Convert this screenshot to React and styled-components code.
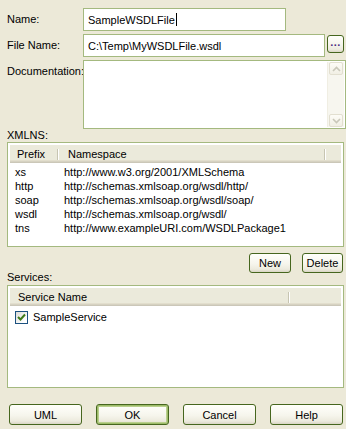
import React from "react";
import styled, { createGlobalStyle, css } from "styled-components";

const Global = createGlobalStyle`
  html, body { margin: 0; padding: 0; background: #ECE9D8; }
  body { font-family: "Liberation Sans", Arial, sans-serif; font-size: 11px; color: #000; }
  * { box-sizing: border-box; }
`;

const Dialog = styled.div`
  width: 346px;
  height: 429px;
  background: #ECE9D8;
  padding: 8px 0 0 7px;
  display: flex;
  flex-direction: column;
`;

const FieldRow = styled.div`
  display: flex;
  align-items: ${(p) => (p.$top ? "flex-start" : "center")};
  margin-bottom: 3px;
`;

const FieldLabel = styled.div`
  width: 76px;
  flex: none;
  line-height: 13px;
  padding-top: ${(p) => (p.$top ? "5px" : "0")};
`;

const TextBox = styled.div`
  width: ${(p) => p.$w}px;
  height: 23px;
  background: #fff;
  border: 1px solid #A4B97F;
  padding-left: 4px;
  display: flex;
  align-items: center;
  white-space: nowrap;
`;

const Caret = styled.span`
  display: inline-block;
  width: 1px;
  height: 13px;
  background: #000;
  margin-left: 1px;
`;

const buttonFace = css`
  border: 1px solid #46661E;
  border-radius: 3px;
  background: linear-gradient(#FFFFFB 0%, #F6F5EC 55%, #ECEADD 85%, #D9D5C4 100%);
  font-family: "Liberation Sans", Arial, sans-serif;
  font-size: 11px;
  color: #000;
  padding: 0;
  display: flex;
  align-items: center;
  justify-content: center;
`;

const BrowseButton = styled.button`
  ${buttonFace}
  width: 17px;
  height: 18px;
  margin-left: 2px;
  margin-top: 1px;
  align-self: flex-start;
  color: #4B2E83;
  font-weight: bold;
  letter-spacing: 0.5px;
  line-height: 1;
  padding-bottom: 3px;
`;

const TextArea = styled.div`
  width: 263px;
  height: 69px;
  background: #fff;
  border: 1px solid #A4B97F;
  padding: 1px;
  display: flex;
  justify-content: flex-end;
`;

const ScrollBar = styled.div`
  width: 17px;
  height: 100%;
  background: #F7F6EF;
  display: flex;
  flex-direction: column;
  justify-content: space-between;
  border-left: 1px solid #F0EEE3;
`;

const ScrollArrow = styled.div`
  height: 13px;
  margin: 0 1px;
  border: 1px solid #E2DFD0;
  border-radius: 2px;
  background: linear-gradient(#FDFCF7, #F1EFE4);
  display: flex;
  align-items: center;
  justify-content: center;
`;

const SectionLabel = styled.div`
  line-height: ${(p) => p.$lh || 13}px;
  margin-top: ${(p) => p.$mt || 0}px;
`;

const ListBox = styled.div`
  width: 337px;
  height: ${(p) => p.$h}px;
  background: #fff;
  border: 1px solid #A4B97F;
  padding: 2px 2px 2px 2px;
  display: flex;
  flex-direction: column;
`;

const Header = styled.div`
  height: 18px;
  flex: none;
  display: flex;
  background: #EBEADB;
  box-shadow: inset 0 -1px 0 #CBC7B8, inset 0 -2px 0 #D6D2C2, inset 0 -3px 0 #E2DECD;
`;

const HeaderCell = styled.div`
  width: ${(p) => (p.$w ? `${p.$w}px` : "auto")};
  flex: ${(p) => (p.$w ? "none" : "1")};
  padding-left: ${(p) => p.$pl}px;
  display: flex;
  align-items: center;
  padding-bottom: 1px;
  position: relative;
  ${(p) =>
    p.$sep &&
    css`
      &::after {
        content: "";
        position: absolute;
        right: 0;
        top: 4px;
        height: 11px;
        width: 1px;
        background: #C7C5B2;
        box-shadow: 1px 0 0 #fff;
      }
    `}
`;

const Rows = styled.div`
  padding-top: 2px;
  display: flex;
  flex-direction: column;
`;

const Row = styled.div`
  height: ${(p) => p.$h}px;
  display: flex;
  align-items: center;
`;

const Cell = styled.div`
  width: ${(p) => (p.$w ? `${p.$w}px` : "auto")};
  flex: ${(p) => (p.$w ? "none" : "1")};
  padding-left: ${(p) => p.$pl}px;
  white-space: nowrap;
`;

const Check = styled.div`
  width: 13px;
  height: 13px;
  margin-left: 5px;
  margin-right: 5px;
  border: 1px solid #1C5180;
  background: linear-gradient(135deg, #DCDCD7 0%, #FFFFFF 80%);
  display: flex;
  align-items: center;
  justify-content: center;
`;

const ActionRow = styled.div`
  display: flex;
  justify-content: flex-end;
  gap: 11px;
  margin-top: 6px;
  padding-right: 3px;
`;

const Button = styled.button`
  ${buttonFace}
  width: ${(p) => p.$w}px;
  height: ${(p) => p.$h}px;
  ${(p) =>
    p.$default &&
    css`
      box-shadow: inset 0 0 0 1px #9DBB69, inset 0 0 0 2px #B9CF8D;
    `}
`;

const Footer = styled.div`
  display: flex;
  gap: 14px;
  margin-top: 16px;
  padding-left: 2px;
`;

const Up = () => (
  <svg width="9" height="6" viewBox="0 0 9 6">
    <path d="M1 5 L4.5 1.5 L8 5" fill="none" stroke="#C9C7B9" strokeWidth="1.6" />
  </svg>
);
const Down = () => (
  <svg width="9" height="6" viewBox="0 0 9 6">
    <path d="M1 1 L4.5 4.5 L8 1" fill="none" stroke="#C9C7B9" strokeWidth="1.6" />
  </svg>
);

const ns = [
  ["xs", "http://www.w3.org/2001/XMLSchema"],
  ["http", "http://schemas.xmlsoap.org/wsdl/http/"],
  ["soap", "http://schemas.xmlsoap.org/wsdl/soap/"],
  ["wsdl", "http://schemas.xmlsoap.org/wsdl/"],
  ["tns", "http://www.exampleURI.com/WSDLPackage1"],
];

export default function App() {
  return (
    <>
      <Global />
      <Dialog>
        <FieldRow>
          <FieldLabel>Name:</FieldLabel>
          <TextBox $w={203}>
            SampleWSDLFile<Caret />
          </TextBox>
        </FieldRow>
        <FieldRow>
          <FieldLabel>File Name:</FieldLabel>
          <TextBox $w={242}>C:\Temp\MyWSDLFile.wsdl</TextBox>
          <BrowseButton>...</BrowseButton>
        </FieldRow>
        <FieldRow $top>
          <FieldLabel $top>Documentation:</FieldLabel>
          <TextArea>
            <ScrollBar>
              <ScrollArrow><Up /></ScrollArrow>
              <ScrollArrow><Down /></ScrollArrow>
            </ScrollBar>
          </TextArea>
        </FieldRow>
        <SectionLabel $mt={-3}>XMLNS:</SectionLabel>
        <ListBox $h={105}>
          <Header>
            <HeaderCell $w={48} $pl={7} $sep>Prefix</HeaderCell>
            <HeaderCell $w={267} $pl={10} $sep>Namespace</HeaderCell>
            <HeaderCell />
          </Header>
          <Rows>
            {ns.map(([p, u]) => (
              <Row key={p} $h={14}>
                <Cell $w={48} $pl={5}>{p}</Cell>
                <Cell $pl={6}>{u}</Cell>
              </Row>
            ))}
          </Rows>
        </ListBox>
        <ActionRow>
          <Button $w={42} $h={20}>New</Button>
          <Button $w={41} $h={20}>Delete</Button>
        </ActionRow>
        <SectionLabel $mt={-3} $lh={15}>Services:</SectionLabel>
        <ListBox $h={103}>
          <Header>
            <HeaderCell $w={279} $pl={8} $sep>Service Name</HeaderCell>
            <HeaderCell />
          </Header>
          <Rows>
            <Row $h={18}>
              <Check>
                <svg width="9" height="9" viewBox="0 0 9 9">
                  <path d="M1 4 L3.5 6.5 L8 1.5" fill="none" stroke="#3F7A1A" strokeWidth="2" />
                </svg>
              </Check>
              <Cell>SampleService</Cell>
            </Row>
          </Rows>
        </ListBox>
        <Footer>
          <Button $w={73} $h={21}>UML</Button>
          <Button $w={73} $h={21} $default>OK</Button>
          <Button $w={73} $h={21}>Cancel</Button>
          <Button $w={73} $h={21}>Help</Button>
        </Footer>
      </Dialog>
    </>
  );
}
